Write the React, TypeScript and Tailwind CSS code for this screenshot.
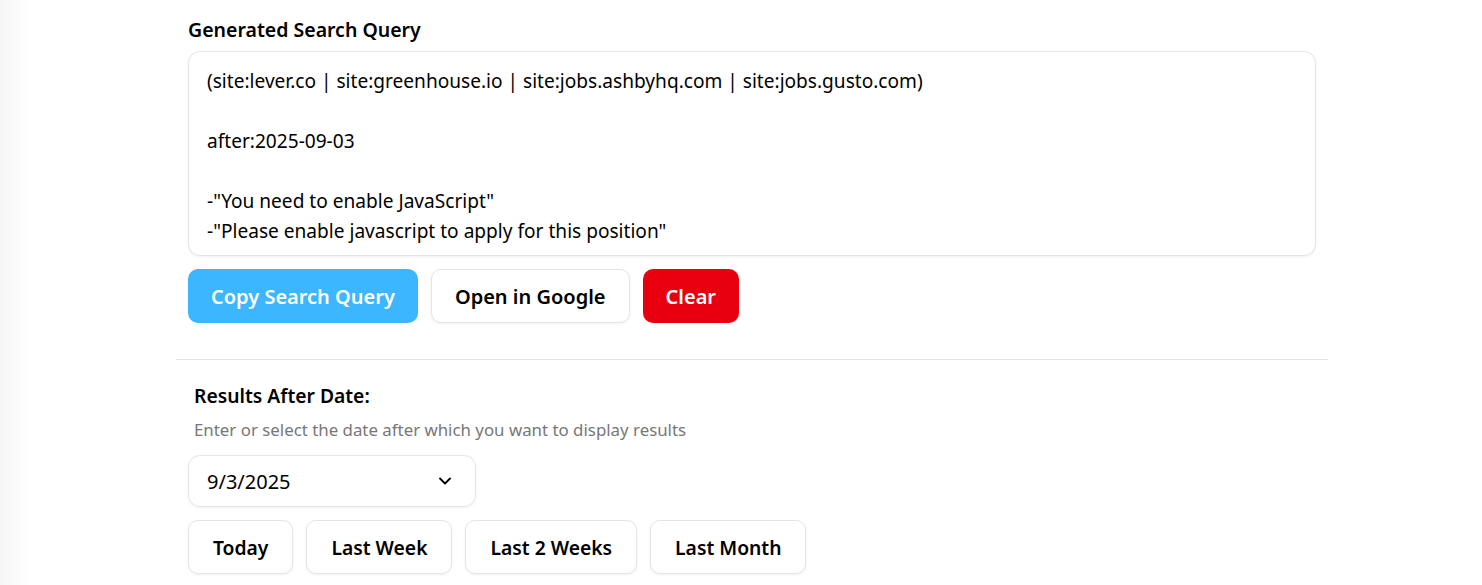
import { useState } from 'react';

const QUERY = `(site:lever.co | site:greenhouse.io | site:jobs.ashbyhq.com | site:jobs.gusto.com)

after:2025-09-03

-"You need to enable JavaScript"
-"Please enable javascript to apply for this position"`;

function ChevronDown() {
  return (
    <svg width="20" height="20" viewBox="0 0 24 24" fill="none" stroke="currentColor" strokeWidth="2.2" strokeLinecap="round" strokeLinejoin="round">
      <path d="m6 9 6 6 6-6" />
    </svg>
  );
}

export default function App() {
  const [query, setQuery] = useState(QUERY);
  const [date] = useState('9/3/2025');

  return (
    <div
      className="min-h-[585px] bg-[linear-gradient(to_right,#f6f6f6_0px,#ffffff_30px)] text-black"
      style={{ fontFamily: '"Noto Sans", "Open Sans", sans-serif' }}
    >
      <div className="w-[1152px] ml-[176px]">
        {/* Generated query */}
        <div className="px-3 pt-[17px]">
          <h2 className="text-[19.5px] font-semibold leading-[26px] mb-[8px]">Generated Search Query</h2>
          <div className="rounded-xl border border-[#e5e5e5] bg-white shadow-[0_1px_3px_rgba(0,0,0,0.06)] pl-[18px] pr-4 pt-[14px] pb-[9px]">
            <textarea
              value={query}
              onChange={(e) => setQuery(e.target.value)}
              rows={6}
              className="w-full resize-none bg-transparent outline-none text-[19.1px] leading-[30px] block overflow-hidden"
            />
          </div>
          <div className="flex gap-[13px] mt-[13px]">
            <button className="h-[54px] px-[23px] pt-[2px] rounded-[10px] bg-[#3cb6ff] text-white text-[20px] font-semibold">
              Copy Search Query
            </button>
            <button className="h-[54px] px-[23px] pt-[2px] rounded-[10px] bg-white border border-[#e5e5e5] shadow-[0_1px_3px_rgba(0,0,0,0.06)] text-[20px] font-semibold">
              Open in Google
            </button>
            <button className="h-[54px] px-[23px] pt-[2px] rounded-[10px] bg-[#e8000e] text-white text-[20px] font-semibold">
              Clear
            </button>
          </div>
        </div>

        <hr className="border-0 border-t border-[#e5e5e5] mt-[36px]" />

        {/* Date */}
        <div className="px-3 pt-[23px]">
          <h3 className="px-[6px] text-[19.3px] font-semibold leading-[26px]">Results After Date:</h3>
          <p className="px-[6px] mt-[9px] text-[16.85px] text-[#777777] leading-[24px]">
            Enter or select the date after which you want to display results
          </p>
          <button className="mt-[13px] w-[288px] h-[52px] flex items-center justify-between pl-[18px] pr-[20px] rounded-xl border border-[#e5e5e5] bg-white shadow-[0_1px_3px_rgba(0,0,0,0.06)] text-[20px]">
            <span className="pt-[2px]">{date}</span>
            <ChevronDown />
          </button>
          <div className="flex gap-[13px] mt-[13px]">
            {['Today', 'Last Week', 'Last 2 Weeks', 'Last Month'].map((label) => (
              <button
                key={label}
                className="h-[54px] px-[24px] pt-[2px] rounded-[10px] bg-white border border-[#e5e5e5] shadow-[0_1px_3px_rgba(0,0,0,0.06)] text-[19.3px] font-semibold"
              >
                {label}
              </button>
            ))}
          </div>
        </div>
      </div>
    </div>
  );
}
